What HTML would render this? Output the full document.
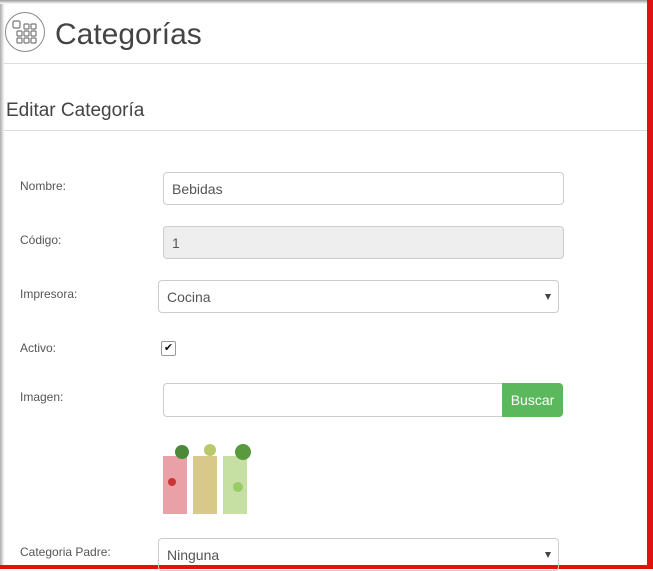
<!DOCTYPE html><html><head><style>
body{margin:0;width:653px;height:569px;overflow:hidden;background:#fff;font-family:"Liberation Sans",sans-serif;position:relative}
.a{position:absolute}
.lbl{position:absolute;left:20px;font-size:12px;color:#555}
.in{position:absolute;box-sizing:border-box;border:1px solid #ccc;border-radius:4px;font-size:14px;color:#555;padding:0 0 0 8px;display:flex;align-items:center}
.arr{position:absolute;right:7px;top:13px;width:0;height:0;border-left:3px solid transparent;border-right:3px solid transparent;border-top:6px solid #444}
</style></head><body>
<div class="a" style="left:0;top:0;width:5px;height:569px;background:linear-gradient(90deg,#aaa,#eee 70%,#fff)"></div>
<div class="a" style="left:0;top:0;width:653px;height:4px;background:linear-gradient(#999,#fff)"></div>
<div class="a" style="left:647px;top:0;width:6px;height:569px;background:#e0110f"></div>
<div class="a" style="left:0;top:565px;width:653px;height:4px;background:#e0110f"></div>
<svg class="a" style="left:4px;top:12px" width="42" height="42" viewBox="0 0 42 42"><circle cx="21" cy="20" r="19.5" fill="none" stroke="#888" stroke-width="1"/>
<g fill="none" stroke="#777" stroke-width="1.2"><rect x="9" y="9" width="7" height="7" rx="1.5"/><rect x="20" y="12" width="5" height="5" rx="1"/><rect x="27" y="12" width="5" height="5" rx="1"/><rect x="13" y="19" width="5" height="5" rx="1"/><rect x="20" y="19" width="5" height="5" rx="1"/><rect x="27" y="19" width="5" height="5" rx="1"/><rect x="13" y="26" width="5" height="5" rx="1"/><rect x="20" y="26" width="5" height="5" rx="1"/><rect x="27" y="26" width="5" height="5" rx="1"/></g></svg>
<div class="a" style="left:55px;top:18px;font-size:30px;color:#444">Categorías</div>
<div class="a" style="left:4px;top:63px;width:643px;height:1px;background:#ddd"></div>
<div class="a" style="left:6px;top:100px;font-size:19px;color:#444">Editar Categoría</div>
<div class="a" style="left:4px;top:130px;width:643px;height:1px;background:#ddd"></div>
<div class="lbl" style="top:179px">Nombre:</div>
<div class="in" style="left:163px;top:172px;width:401px;height:33px">Bebidas</div>
<div class="lbl" style="top:233px">Código:</div>
<div class="in" style="left:163px;top:226px;width:401px;height:33px;background:#eee">1</div>
<div class="lbl" style="top:287px">Impresora:</div>
<div class="in" style="left:158px;top:280px;width:401px;height:33px">Cocina<span class="arr"></span></div>
<div class="lbl" style="top:341px">Activo:</div>
<div class="a" style="left:161px;top:341px;width:13px;height:13px;border:1px solid #999;border-radius:2px;font-size:11px;line-height:13px;text-align:center;color:#111">✔</div>
<div class="lbl" style="top:390px">Imagen:</div>
<div class="in" style="left:163px;top:383px;width:340px;height:34px;border-radius:4px 0 0 4px"></div>
<div class="a" style="left:502px;top:383px;width:61px;height:34px;background:#5cb85c;border-radius:0 4px 4px 0;color:#fff;font-size:14px;line-height:34px;text-align:center">Buscar</div>
<svg class="a" style="left:160px;top:442px" width="100" height="76">
<rect x="3" y="14" width="24" height="58" fill="#e9a0a6"/><rect x="33" y="14" width="24" height="58" fill="#d8c98a"/><rect x="63" y="14" width="24" height="58" fill="#c6e0a4"/>
<circle cx="22" cy="10" r="7" fill="#4c8a3a"/><circle cx="50" cy="8" r="6" fill="#b9c96a"/><circle cx="83" cy="10" r="8" fill="#5a9a3e"/><circle cx="12" cy="40" r="4" fill="#c33"/><circle cx="78" cy="45" r="5" fill="#9c6"/></svg>
<div class="lbl" style="top:545px">Categoria Padre:</div>
<div class="in" style="left:158px;top:538px;width:401px;height:33px">Ninguna<span class="arr"></span></div>
</body></html>
